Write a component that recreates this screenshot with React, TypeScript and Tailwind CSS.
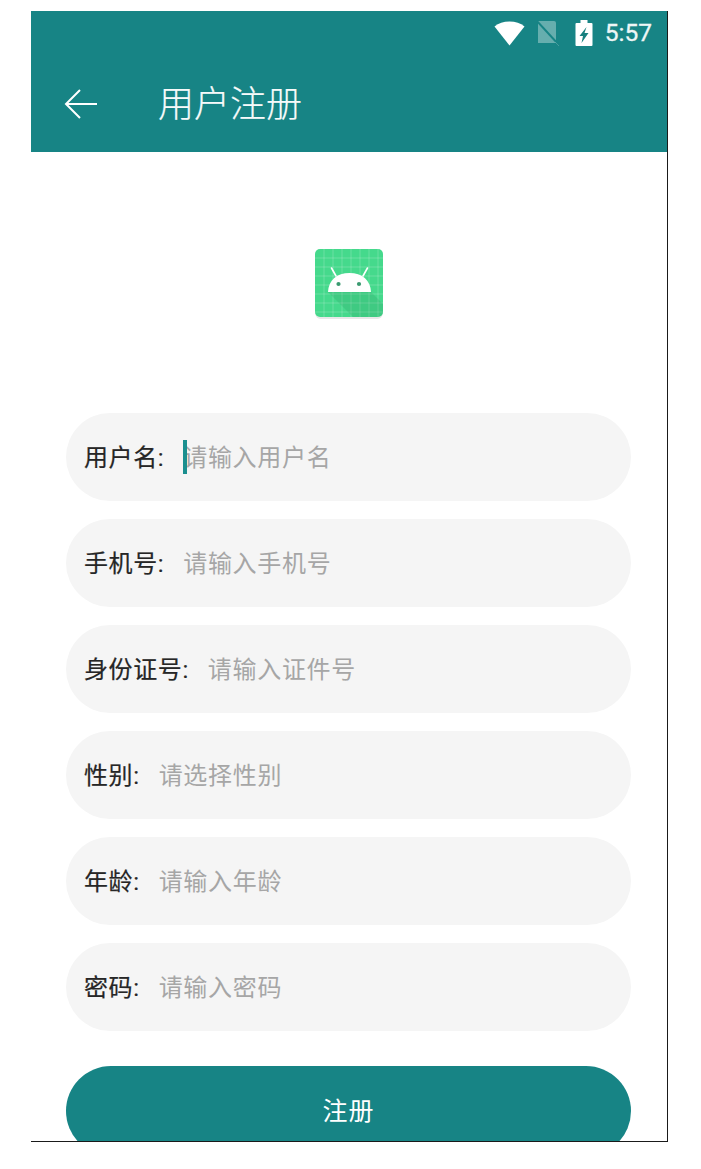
const rows = [
  { label: "用户名:", placeholder: "请输入用户名", caret: true },
  { label: "手机号:", placeholder: "请输入手机号" },
  { label: "身份证号:", placeholder: "请输入证件号" },
  { label: "性别:", placeholder: "请选择性别" },
  { label: "年龄:", placeholder: "请输入年龄" },
  { label: "密码:", placeholder: "请输入密码" },
];

const cjk = "font-['Roboto','Noto_Sans_CJK_SC',sans-serif]";

function Logo() {
  const grid = [9, 18, 27, 36, 45, 54, 63];
  return (
    <svg width="68" height="70" viewBox="0 0 68 70">
      <defs>
        <clipPath id="c"><rect x="0" y="0" width="68" height="68" rx="5" /></clipPath>
      </defs>
      <rect x="0.5" y="1" width="67" height="69" rx="5" fill="#d8d8d8" opacity="0.6" />
      <g clipPath="url(#c)">
        <rect width="68" height="68" fill="#45d98c" />
        {grid.map((g) => (
          <g key={g} stroke="#ffffff" strokeOpacity="0.2" strokeWidth="1">
            <path d={`M${g} 0V68`} />
            <path d={`M0 ${g}H68`} />
          </g>
        ))}
        <path d="M13 43H56L68 55V68H38Z" fill="#1f6f47" fillOpacity="0.14" />
      </g>
      <path d="M13 43C13.5 31 22 24 34.5 24S55.5 31 56 43Z" fill="#ffffff" />
      <path d="M21 27L16.5 19M48 27L52.5 19" stroke="#ffffff" strokeWidth="1.6" strokeLinecap="round" />
      <circle cx="23.5" cy="35" r="2.1" fill="#3a9a70" />
      <circle cx="44" cy="35" r="2.1" fill="#3a9a70" />
    </svg>
  );
}

function StatusIcons() {
  return (
    <div className="flex items-center">
      <svg width="31" height="25" viewBox="0 0 31 25" className="mr-[11px]">
        <path d="M15.5 24.5L0.5 5.5C4.5 2 9.5 0.5 15.5 0.5S26.5 2 30.5 5.5Z" fill="#ffffff" />
      </svg>
      <svg width="23" height="26" viewBox="0 0 23 26" className="mr-[16px]">
        <path d="M2 1H18Q20 1 20 3V23H2Z" fill="#ffffff" fillOpacity="0.34" />
        <path d="M0 0L23 25" stroke="#178485" strokeWidth="2" />
        <path d="M19 22L23 26" stroke="#ffffff" strokeOpacity="0.2" strokeWidth="1" />
      </svg>
      <svg width="18" height="26" viewBox="0 0 18 26" className="mr-[12px]">
        <path d="M5.5 0H12.5V3H16.5A1 1 0 0 1 17.5 4V25A1 1 0 0 1 16.5 26H1.5A1 1 0 0 1 0.5 25V4A1 1 0 0 1 1.5 3H5.5Z" fill="#ffffff" />
        <path d="M11.5 7L4.5 16H8L6.5 23L13.5 13H9.5Z" fill="#17807f" />
      </svg>
      <span className="mr-[15px] font-['Roboto',sans-serif] text-[24.5px] leading-none text-[#eef6f6] [-webkit-text-stroke:0.3px_#eef6f6]">5:57</span>
    </div>
  );
}

export default function App() {
  return (
    <div className="h-[1169px] w-[701px] bg-white pl-[31px] pt-[11px]">
      <div className={`h-[1131px] w-[637px] overflow-hidden border-r border-b border-[#1a1a1a] bg-white ${cjk}`}>
        <header className="h-[141px] bg-[#178485] pt-[9px]">
          <div className="flex h-[26px] justify-end">
            <StatusIcons />
          </div>
          <div className="mt-[37px] flex items-center">
            <svg width="36" height="34" viewBox="0 0 36 34" className="ml-[32px] -translate-y-[1px]">
              <path d="M34 17H3M17 3L3 17L17 31" fill="none" stroke="#ffffff" strokeWidth="2" />
            </svg>
            <h1 className="ml-[59px] text-[36px] font-light leading-[44px] text-[#f6fafa] [-webkit-text-stroke:0.2px_#f6fafa]">用户注册</h1>
          </div>
        </header>

        <div className="flex justify-center pt-[97px]">
          <div className="h-[70px]">
            <Logo />
          </div>
        </div>

        <div className="mt-[94px] flex flex-col gap-[18px] px-[35px]">
          {rows.map((r) => (
            <div key={r.label} className="flex h-[88px] w-[565px] items-center rounded-[44px] bg-[#f5f5f5] pl-[18px] pt-[2px]">
              <span className="text-[24px] leading-none tracking-[0.6px] text-[#262626] [-webkit-text-stroke:0.2px_#262626]">{r.label}</span>
              <span className="relative ml-[19px] text-[24px] leading-none tracking-[0.7px] text-[#a6a6a6]">
                {r.caret && <span className="absolute left-0 -top-[6px] h-[34px] w-[4px] bg-[#1a8f8f]" />}
                {r.placeholder}
              </span>
            </div>
          ))}
          <button className="mt-[17px] flex h-[90px] w-[565px] shrink-0 items-center justify-center rounded-[45px] bg-[#178485] pt-[2px] text-[25px] tracking-[1px] text-white">
            注册
          </button>
        </div>
      </div>
    </div>
  );
}
